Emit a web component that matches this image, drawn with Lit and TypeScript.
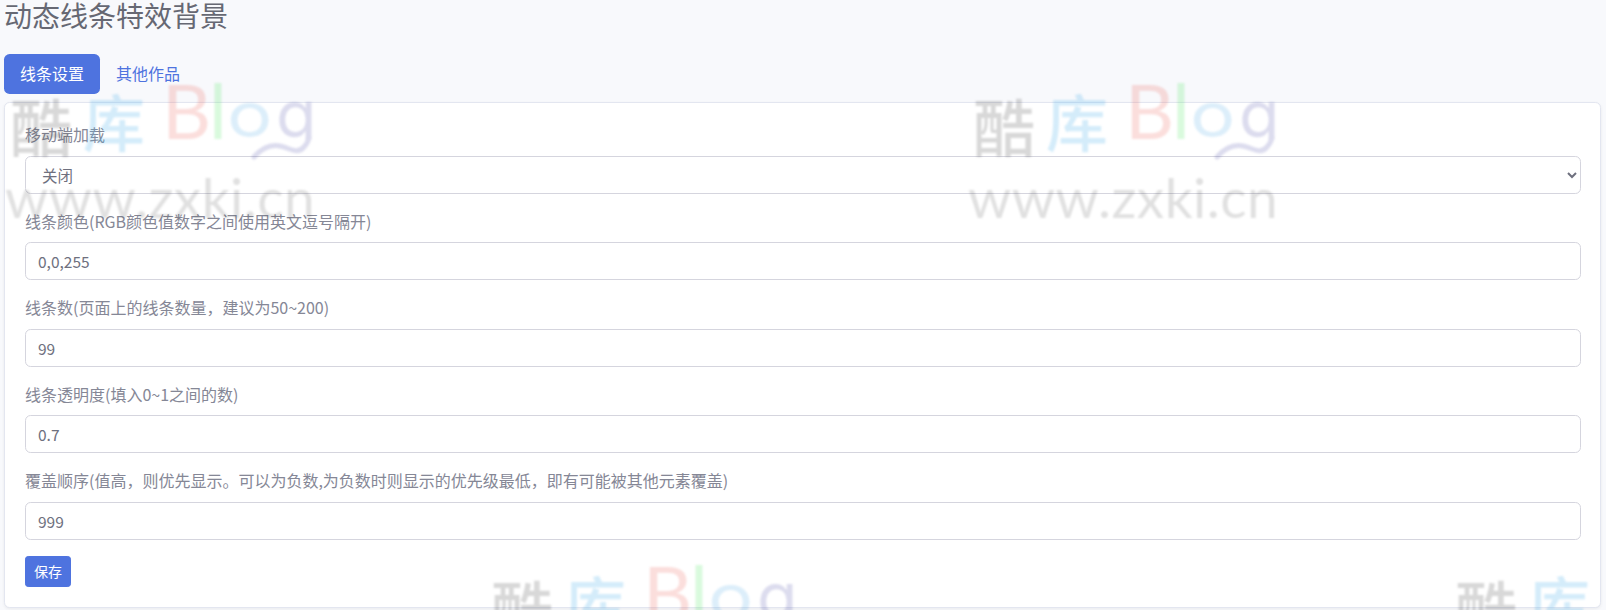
import { LitElement, html, css } from "lit";
import { customElement } from "lit/decorators.js";

const FIELDS = [
  { label: "线条颜色(RGB颜色值数字之间使用英文逗号隔开)", value: "0,0,255" },
  { label: "线条数(页面上的线条数量，建议为50~200)", value: "99" },
  { label: "线条透明度(填入0~1之间的数)", value: "0.7" },
  { label: "覆盖顺序(值高，则优先显示。可以为负数,为负数时则显示的优先级最低，即有可能被其他元素覆盖)", value: "999" },
];
const TILES = [
  [10, 85],
  [973, 85],
  [491, 567],
  [1455, 567],
];

@customElement("app-root")
export class AppRoot extends LitElement {
  static styles = css`
    :host {
      display: block;
      position: relative;
      height: 610px;
      overflow: hidden;
      background: #f8f9fc;
      color: #858796;
      font: 16px/1.5 "Noto Sans CJK SC", "Noto Sans", sans-serif;
    }
    .page { padding: 0 5px 0 4px; }
    h3 {
      margin: 0 0 24px;
      font-size: 28px;
      font-weight: 400;
      line-height: 30px;
      color: #666873;
    }
    .tabs { display: flex; margin-bottom: 8px; }
    .tab { padding: 7px 16px 9px; border-radius: 5.6px; color: #4e73df; }
    .tab.active { background: #4e73df; color: #fff; }
    .card {
      background: #fff;
      border: 1px solid #e3e6f0;
      border-radius: 5.6px;
      padding: 19px 19.5px 20px 20px;
      box-shadow: 0 1px 3px rgba(58, 59, 69, 0.08);
    }
    .group { margin-bottom: 15px; }
    .group:last-of-type { margin-bottom: 16.5px; }
    label { display: block; margin-bottom: 9.5px; line-height: 24px; font-size: 16px; }
    .control {
      display: block;
      box-sizing: border-box;
      width: 100%;
      height: 38px;
      padding: 6px 12px;
      border: 1px solid #d5d5de;
      border-radius: 5.6px;
      background: #fff;
      color: #6e707e;
      font: inherit;
      font-size: 15.5px;
      line-height: 24px;
      outline: none;
    }
    .save {
      display: block;
      height: 31px;
      padding: 4px 8px;
      border: 1px solid #4e73df;
      border-radius: 3.2px;
      background: #4e73df;
      color: #fff;
      font: inherit;
      font-size: 14px;
      line-height: 21px;
    }
    .wm { position: absolute; width: 320px; height: 150px; pointer-events: none; filter: blur(0.8px); }
    .wm span { position: absolute; white-space: nowrap; line-height: 1; }
    .han { font-family: "Noto Sans CJK SC", sans-serif; font-size: 62px; font-weight: 500; }
    .ku { left: 0; top: 9px; color: rgba(60, 60, 60, 0.2); }
    .ko { left: 73px; top: 4px; color: rgba(90, 180, 235, 0.26); }
    .lat { top: -13px; }
    .b { left: 152px; font: 400 76px/1 "Lato", sans-serif; color: rgba(235, 90, 80, 0.2); }
    .l { left: 199px; font: 400 76px/1 "Lato", sans-serif; color: rgba(80, 230, 100, 0.22); }
    .o {
      left: 217px;
      top: -1px;
      font: 400 62px/1 "Inter", sans-serif;
      color: rgba(80, 170, 230, 0.2);
      transform: scaleX(1.22);
      transform-origin: left;
    }
    .tail { position: absolute; inset: 0; opacity: 0.2; }
    .g {
      left: 266px;
      top: -4px;
      font: 400 66px/1 "Inter", sans-serif;
      color: rgb(80, 80, 170);
      clip-path: inset(-10px -10px 7px -10px);
    }
    .url {
      left: -5px;
      top: 85px;
      font: 400 55px/1 "Lato", sans-serif;
      letter-spacing: 0.5px;
      color: rgba(60, 60, 60, 0.16);
    }
    svg { position: absolute; left: 235px; top: 45px; overflow: visible; }
    svg path { stroke: rgb(80, 80, 170); }
  `;

  render() {
    return html`
      <div class="page">
        <h3>动态线条特效背景</h3>
        <div class="tabs">
          <div class="tab active">线条设置</div>
          <div class="tab">其他作品</div>
        </div>
        <div class="card">
          <div class="group">
            <label>移动端加载</label>
            <select class="control"><option>关闭</option></select>
          </div>
          ${FIELDS.map(
            (f) => html`<div class="group">
              <label>${f.label}</label>
              <input class="control" .value=${f.value} />
            </div>`
          )}
          <button class="save">保存</button>
        </div>
      </div>
      ${TILES.map(
        ([x, y]) => html`<div class="wm" style="left:${x}px;top:${y}px">
          <span class="han ku">酷</span>
          <span class="han ko">库</span>
          <span class="lat b">B</span>
          <span class="lat l">l</span>
          <span class="o">o</span>
          <div class="tail">
            <span class="g">g</span>
            <svg width="70" height="30" viewBox="0 0 70 30" fill="none">
              <path d="M9 27C16 19 25 14 35 16S52 25 59 17C62 14 63.500 11 64 7" stroke-width="5" stroke-linecap="round"/>
            </svg>
          </div>
          <span class="url">www.zxki.cn</span>
        </div>`
      )}
    `;
  }
}
